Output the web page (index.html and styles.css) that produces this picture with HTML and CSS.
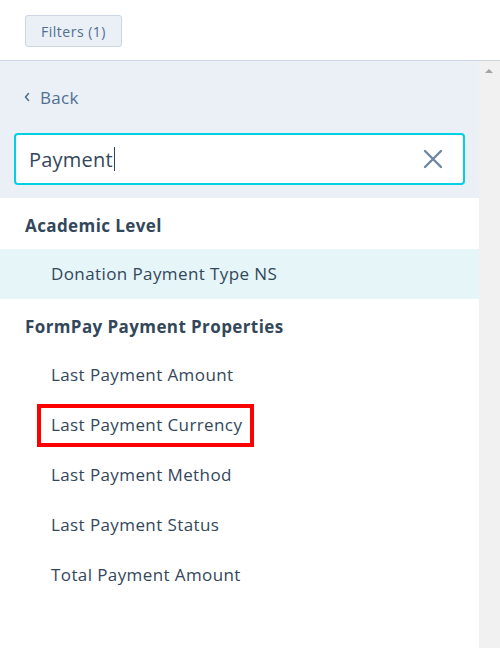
FILE: index.html
```html
<!DOCTYPE html>
<html>
<head>
<meta charset="utf-8">
<link rel="stylesheet" href="styles.css">
</head>
<body>
<div class="topbar">
  <button class="filters-btn">Filters (1)</button>
</div>
<div class="main">
  <div class="content">
    <div class="panel">
      <div class="back"><svg class="chev" width="6" height="10" viewBox="0 0 6 10"><path d="M4.5 1.5 L1.5 5 L4.5 8.5" stroke="#516f90" stroke-width="1.6" fill="none" stroke-linecap="round" stroke-linejoin="round"/></svg><span>Back</span></div>
      <div class="search">
        <span class="search-text">Payment</span><span class="caret"></span>
        <svg class="clear" width="20" height="20" viewBox="0 0 20 20"><path d="M2 2 L18 18 M18 2 L2 18" stroke="#6d87a3" stroke-width="2.4" stroke-linecap="round" fill="none"/></svg>
      </div>
    </div>
    <div class="list">
      <div class="group">Academic Level</div>
      <div class="item active">Donation Payment Type NS</div>
      <div class="group">FormPay Payment Properties</div>
      <div class="item">Last Payment Amount</div>
      <div class="item"><span class="marked">Last Payment Currency</span></div>
      <div class="item">Last Payment Method</div>
      <div class="item">Last Payment Status</div>
      <div class="item">Total Payment Amount</div>
    </div>
  </div>
  <div class="scrollbar"><div class="arrow-up"></div></div>
</div>
</body>
</html>
```
FILE: styles.css
```css
* { box-sizing: border-box; }
html, body { margin: 0; padding: 0; }
body {
  width: 500px;
  height: 648px;
  overflow: hidden;
  background: #fff;
  font-family: "Open Sans", "Noto Sans", sans-serif;
  color: #33475b;
}
.topbar {
  height: 61px;
  border-bottom: 1px solid #cbd6e2;
  padding: 15px 0 0 25px;
}
.filters-btn {
  height: 32px;
  width: 97px;
  background: #eaf0f6;
  border: 1px solid #cbd6e2;
  border-radius: 3px;
  color: #506e91;
  font-family: inherit;
  font-size: 14px;
  letter-spacing: 0.5px;
  padding: 0;
}
.main {
  display: flex;
  height: 587px;
}
.content { flex: 1; }
.scrollbar {
  width: 21px;
  background: #f1f1f1;
  position: relative;
}
.arrow-up {
  position: absolute;
  left: 6px;
  top: 8px;
  width: 0; height: 0;
  border-left: 4px solid transparent;
  border-right: 4px solid transparent;
  border-bottom: 4px solid #a3a3a3;
}
.panel {
  background: #eaf0f6;
  height: 137px;
  padding: 24px 14px 0 14px;
}
.back {
  color: #516f90;
  font-size: 17px;
  letter-spacing: 0.3px;
  padding-left: 10px;
  height: 24px;
  display: flex;
  align-items: center;
}
.chev { margin-right: 10px; }
.search {
  margin-top: 24px;
  height: 52px;
  border: 2px solid #00d0e4;
  border-radius: 4px;
  background: #fff;
  display: flex;
  align-items: center;
  padding-left: 13px;
  padding-right: 20px;
}
.search-text { font-size: 20px; letter-spacing: 0.2px; color: #33475b; }
.caret { width: 1px; height: 24px; background: #33475b; margin-left: 1px; }
.clear { margin-left: auto; }
.group {
  height: 51px;
  line-height: 55px;
  padding-left: 25px;
  font-weight: 700;
  font-size: 17px;
  letter-spacing: 0.4px;
  color: #33475b;
}
.item {
  height: 50px;
  display: flex;
  align-items: center;
  padding-left: 51px;
  padding-bottom: 2px;
  font-size: 17px;
  letter-spacing: 0.4px;
  color: #33475b;
}
.item.active { background: #e5f5f8; }
.marked {
  border: 4px solid #f00;
  height: 43px;
  padding: 0 8px 2px 10px;
  margin-left: -14px;
  margin-top: 2px;
  display: flex;
  align-items: center;
}
```
